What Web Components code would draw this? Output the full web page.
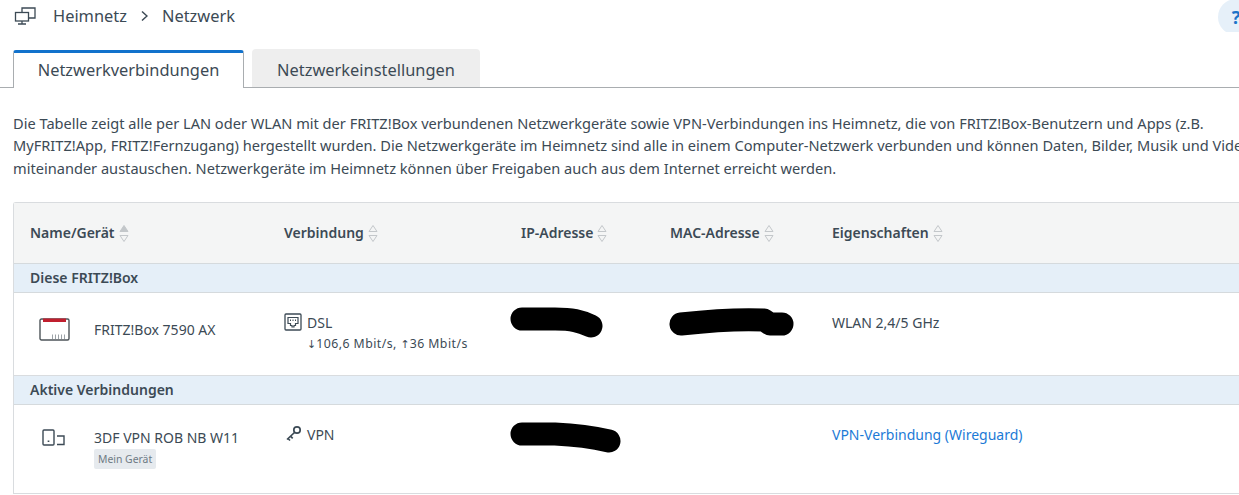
<!DOCTYPE html>
<html lang="de">
<head>
<meta charset="utf-8">
<title>Netzwerk</title>
<style>
    html, body { margin: 0; height: 495px; overflow: hidden; background: #fff; }
    body { font: 14px/20px "Noto Sans", "Liberation Sans", sans-serif; color: #3c4a55; }
</style>
</head>
<body>
<fb-breadcrumb first="Heimnetz" second="Netzwerk"></fb-breadcrumb>
<fb-tabs>
    <fb-tab active>Netzwerkverbindungen</fb-tab>
    <fb-tab>Netzwerkeinstellungen</fb-tab>
</fb-tabs>
<fb-intro>
    <span>Die Tabelle zeigt alle per LAN oder WLAN mit der FRITZ!Box verbundenen Netzwerkgeräte sowie VPN-Verbindungen ins Heimnetz, die von FRITZ!Box-Benutzern und Apps (z.B.</span>
    <span>MyFRITZ!App, FRITZ!Fernzugang) hergestellt wurden. Die Netzwerkgeräte im Heimnetz sind alle in einem Computer-Netzwerk verbunden und können Daten, Bilder, Musik und Videos</span>
    <span>miteinander austauschen. Netzwerkgeräte im Heimnetz können über Freigaben auch aus dem Internet erreicht werden.</span>
</fb-intro>
<fb-table>
    <fb-table-head>
        <fb-sort-col active>Name/Gerät</fb-sort-col>
        <fb-sort-col>Verbindung</fb-sort-col>
        <fb-sort-col>IP-Adresse</fb-sort-col>
        <fb-sort-col>MAC-Adresse</fb-sort-col>
        <fb-sort-col>Eigenschaften</fb-sort-col>
    </fb-table-head>
    <fb-section>Diese FRITZ!Box</fb-section>
    <fb-row style="--row-h:83px">
        <fb-device kind="box" style="--pad:27px;--icon-y:-2px;--icon-x:0px">FRITZ!Box 7590 AX</fb-device>
        <fb-connection kind="dsl" name="DSL">
            <span class="rate"><small>↓</small>106,6 Mbit/s, <small>↑</small>36 Mbit/s</span>
        </fb-connection>
        <fb-scribble variant="ip"></fb-scribble>
        <fb-scribble variant="mac"></fb-scribble>
        <div style="padding-top:20px">WLAN 2,4/5 GHz</div>
    </fb-row>
    <fb-section>Aktive Verbindungen</fb-section>
    <fb-row style="--row-h:89px">
        <fb-device kind="own" tag="Mein Gerät" style="--pad:23px;--icon-y:1px;--icon-x:3px">3DF VPN ROB NB W11</fb-device>
        <fb-connection kind="vpn" name="VPN"></fb-connection>
        <fb-scribble variant="ip2"></fb-scribble>
        <div></div>
        <div style="padding-top:20px;color:#1c7ad6">VPN-Verbindung (Wireguard)</div>
    </fb-row>
</fb-table>

<script>
    // kleine Hilfsfunktion, damit nicht jede Klasse attachShadow wiederholt
    function define(name, html, setup) {
        customElements.define(name, class extends HTMLElement {
            constructor() {
                super();
                this.attachShadow({ mode: 'open' });
            }
            connectedCallback() {
                this.shadowRoot.innerHTML = typeof html === 'function' ? html(this) : html;
                if (setup) setup(this);
            }
        });
    }

    const ICONS = {
        box: `<svg width="31" height="23" viewBox="0 0 31 23" fill="none">
                <rect x="1" y="1" width="29" height="21" rx="1.500" fill="#fff" stroke="#4d5459" stroke-width="1.400"/>
                <rect x="4" y="0.500" width="23" height="3.500" fill="#c01f2e"/>
                <path d="M13.500 16.500v4.500M16.500 16.500v4.500M19.500 16.500v4.500M22.500 16.500v4.500M25.500 16.500v4.500" stroke="#9da3a8"/>
              </svg>`,
        own: `<svg width="24" height="17" viewBox="0 0 24 17" fill="none" stroke="#3c4a55" stroke-width="1.400">
                <rect x="1" y="1" width="11" height="15" rx="1"/>
                <path d="M6.500 11.500v1.500" stroke-width="1.700"/>
                <path d="M15 7h7v8.500h-7"/>
              </svg>`,
        dsl: `<svg width="18" height="18" viewBox="0 0 18 18" fill="none" stroke="#3c4a55">
                <rect x="1" y="1" width="16" height="16" rx="1" stroke-width="1.300"/>
                <path d="M4 4.500h10v6h-2.500v2h-1.500v1.500h-2v-1.500h-1.500v-2h-2.500z" stroke-width="1.200"/>
                <path d="M6.500 6.500v1.500M9 6.500v1.500M11.500 6.500v1.500"/>
              </svg>`,
        vpn: `<svg width="18" height="18" viewBox="0 0 18 18" fill="none" stroke="#3c4a55" stroke-width="1.700">
                <circle cx="13" cy="5" r="3.200"/>
                <path d="M10.500 7.500L3 14.500M6.500 11.200l2.200 2.200M4 13.500l2 2"/>
              </svg>`
    };

    define('fb-breadcrumb', (el) => `
        <style>
            :host { display: flex; align-items: center; height: 32px; padding-left: 14px; font-size: 16.400px; overflow: hidden; }
            svg { flex: none; margin-right: 17px; }
            .sep { margin: 0 14px; display: flex; }
            .help { flex: none; margin-left: auto; margin-right: -15px; margin-top: 2px; width: 36px; height: 36px; border-radius: 50%;
                background: #e6f0f9; color: #1c74c9; font-weight: 700; font-size: 18px; display: flex; align-items: center;
                justify-content: center; }
        </style>
        <svg width="22" height="18" viewBox="0 0 22 18" fill="none" stroke="#3c4a55" stroke-width="1.300">
            <path d="M8 5.500v-4.500h13v10h-6"/>
            <rect x="1.500" y="5.500" width="13" height="8.500" fill="#fff"/>
            <path d="M8 14v2.500M4 17h8"/>
        </svg>
        <span>${el.getAttribute('first')}</span>
        <span class="sep"><svg style="margin:0" width="7" height="12" viewBox="0 0 7 12" fill="none" stroke="#3c4a55" stroke-width="1.500"><path d="M1 1.500l5 4.500-5 4.500"/></svg></span>
        <span>${el.getAttribute('second')}</span>
        <span class="help">?</span>`);

    define('fb-tabs', `
        <style>
            :host { display: flex; gap: 8px; align-items: flex-end; height: 38px; margin-top: 17px; padding-left: 13px; border-bottom: 1px solid #a9adb0; }
        </style>
        <slot></slot>`);

    define('fb-tab', `
        <style>
            :host { display: flex; align-items: center; justify-content: center; box-sizing: border-box; width: 228px; height: 38px;
                background: #eeeeee; border-radius: 4px 4px 0 0; font-size: 16.400px; padding-top: 3px; margin-bottom: 0; }
            :host([active]) { width: 231px; height: 38px; margin-bottom: -1px; background: #fff; border: 1px solid #a9adb0; border-top: 3px solid #1272cc;
                border-bottom: 0; border-radius: 3px 3px 0 0; padding: 0 0 2px; }
        </style>
        <slot></slot>`);

    define('fb-intro', `
        <style>
            :host { display: block; margin: 24px 0 0 13px; overflow: hidden; font-size: 14.600px; line-height: 22.400px; }
            ::slotted(span) { display: block; white-space: nowrap; }
        </style>
        <slot></slot>`);

    define('fb-table', `
        <style>
            :host { display: block; box-sizing: border-box; margin: 22.800px 0 0 13px; border: 1px solid #d9dcdf;
                border-radius: 3px 0 0 0; border-right: 0; border-bottom: 0; }
        </style>
        <slot></slot>`);

    const GRID = 'display: grid; grid-template-columns: 254px 237px 149px 162px 1fr; padding-left: 16px;';

    define('fb-table-head', `
        <style>
            :host { ${GRID} height: 60px; align-items: center; background: #f4f5f5; border-bottom: 1px solid #d5dadd; font-weight: 600; }
        </style>
        <slot></slot>`);

    define('fb-sort-col', `
        <style>
            :host { display: flex; align-items: center; gap: 4px; }
            svg { flex: none; }
        </style>
        <slot></slot>
        <svg width="10" height="19" viewBox="0 0 10 19" fill="none" stroke="#c3c7ca">
            <path class="up" d="M5 1.500l4 6h-8z"/>
            <path d="M5 17.500l4-6h-8z"/>
        </svg>`, (el) => {
        if (el.hasAttribute('active')) el.shadowRoot.querySelector('.up').setAttribute('fill', '#c3c7ca');
    });

    define('fb-section', `
        <style>
            :host { display: flex; align-items: center; box-sizing: border-box; height: 29px; padding-left: 16px; background: #e5eff8;
                border-bottom: 1px solid #d5dadd; font-weight: 600; }
        </style>
        <slot></slot>`);

    define('fb-row', `
        <style>
            :host { ${GRID} box-sizing: border-box; height: var(--row-h); border-bottom: 1px solid #d9dcdf; }
        </style>
        <slot></slot>`);

    define('fb-device', (el) => `
        <style>
            :host { display: flex; padding-top: var(--pad); }
            .icon { width: 64px; flex: none; padding-left: 9px; box-sizing: border-box; }
            .icon svg { display: block; margin: var(--icon-y) 0 0 var(--icon-x); }
            .tag { display: block; width: fit-content; margin-top: 1px; padding: 0 4px; border-radius: 2px; background: #e6eaee; color: #6e7a84;
                font-size: 10.400px; line-height: 20px; }
        </style>
        <div class="icon">${ICONS[el.getAttribute('kind')]}</div>
        <div>
            <slot></slot>
            ${el.hasAttribute('tag') ? `<span class="tag">${el.getAttribute('tag')}</span>` : ''}
        </div>`);

    define('fb-connection', (el) => `
        <style>
            :host { display: block; padding-top: 20px; }
            .line { display: flex; gap: 5px; align-items: center; }
            svg { margin-top: -3px; }
            ::slotted(.rate) { display: block; margin: 1px 0 0 23px; font-size: 12.300px; letter-spacing: .45px; white-space: nowrap; }
        </style>
        <div class="line">${ICONS[el.getAttribute('kind')]}<span>${el.getAttribute('name')}</span></div>
        <slot></slot>`);

    // schwarze Schwärzungen aus dem Screenshot
    const SCRIBBLES = {
        ip: { w: 94, h: 32, x: -11, y: 14, d: 'M12 12H45C62 12 70 14 81 19' },
        mac: { w: 128, h: 32, x: -2, y: 13, d: 'M13 18C40 15 75 13 96 14L102 18H114' },
        ip2: { w: 112, h: 32, x: -11, y: 17, d: 'M12 12H45C68 13 82 15 99 19' }
    };
    define('fb-scribble', (el) => {
        const s = SCRIBBLES[el.getAttribute('variant')];
        return `
        <style>
            :host { display: block; }
            svg { display: block; margin: ${s.y}px 0 0 ${s.x}px; }
        </style>
        <svg width="${s.w}" height="${s.h}" viewBox="0 0 ${s.w} ${s.h}" fill="none" stroke="#000" stroke-width="23" stroke-linecap="round" stroke-linejoin="round">
            <path d="${s.d}"/>
        </svg>`;
    });

    // Pfeile in der Datenrate: breiter Glyph aus DejaVu, wie im Original
    document.querySelectorAll('.rate small').forEach((arrow) => {
        arrow.style.cssText = 'font: 11px "DejaVu Sans", sans-serif; letter-spacing: 0; margin-right: 0;';
    });
</script>
</body>
</html>
